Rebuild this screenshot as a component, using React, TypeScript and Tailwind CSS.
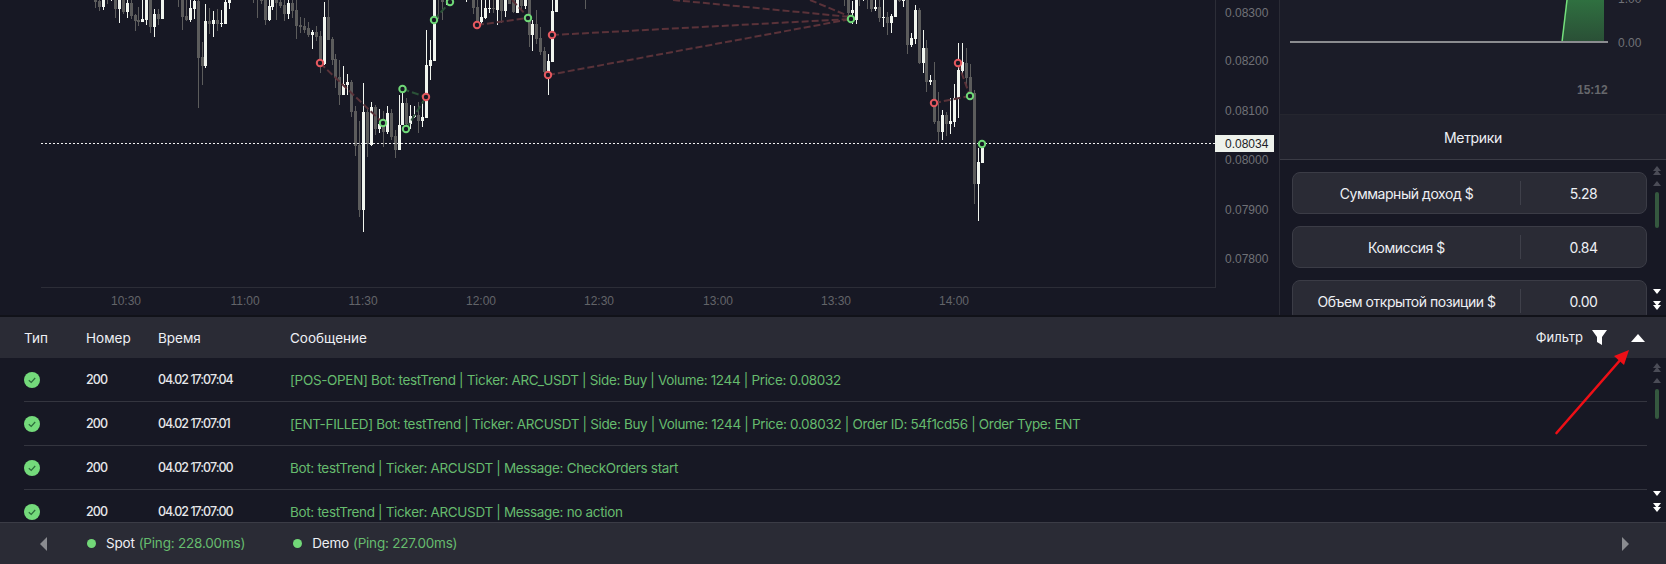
import React from "react";

type C = [number, number, number, number, number, number];
// x, wickTop, wickBottom, bodyTop, bodyBottom, white(1)/gray(0)
const candles: C[] = [
  [95,0,8,-2,2,0],[99,0,11,1,7,0],[103,0,10,0,7,1],[107,0,4,0,0,0],[111,0,1,0,0,1],[115,0,18,0,9,0],[119,0,23,0,9,1],[123,0,14,0,12,0],[127,0,18,3,12,1],[131,0,19,3,16,0],[135,14,31,15,21,0],[138,7,26,20,22,0],[142,0,22,19,22,1],[146,0,25,0,20,1],[150,0,33,0,27,0],[154,9,37,14,27,1],[158,9,25,14,19,0],[162,0,19,0,19,1],[178,0,7,0,0,0],[182,0,30,0,17,0],[186,0,21,16,20,0],[190,0,22,8,20,1],[194,0,19,1,9,1],[198,0,108,1,58,0],[202,42,85,57,66,0],[205,4,68,21,66,1],[209,8,34,21,24,0],[213,11,37,20,24,1],[217,9,31,20,24,0],[221,10,27,23,24,1],[225,0,24,2,24,1],[229,0,9,0,3,1],
  [253,0,3,0,0,0],[257,0,18,0,0,0],[261,0,4,0,1,0],[265,0,25,0,20,0],[269,0,21,6,20,1],[272,0,10,0,7,1],[276,0,20,0,3,0],[280,0,8,2,6,0],[284,0,21,5,14,0],[288,0,19,3,14,1],[292,0,18,3,11,0],[296,0,39,10,26,0],[300,17,33,25,27,0],[304,18,33,26,30,0],[308,22,37,28,35,0],[312,30,49,32,35,1],[316,26,41,32,37,0],[320,31,73,36,63,0],[324,2,65,17,64,1],[328,0,40,17,40,0],[332,37,65,39,60,0],[335,54,88,59,78,0],[339,60,105,77,95,0],[343,66,95,84,95,1],[347,74,95,82,85,1],[351,80,117,82,112,0],[355,106,156,111,146,0],[359,121,217,145,210,0],[363,83,232,112,210,1],[367,108,157,112,144,0],[371,102,146,107,145,1],[375,105,135,107,129,0],[379,109,133,124,129,1],[383,111,147,121,132,0],[387,106,134,113,132,1],[391,109,140,113,137,0],[395,130,158,136,150,0],[399,95,150,125,150,1],[402,88,125,103,125,1],[406,98,127,103,124,0],[410,105,129,116,124,1],[414,106,118,115,117,1],[418,102,133,115,121,0],[422,101,127,117,121,1],[426,30,118,65,118,1],[430,40,80,60,66,1],[434,0,61,0,61,1],[438,0,19,0,0,0],[442,0,20,0,2,0],[446,0,5,0,0,1],
  [466,0,2,0,0,1],[473,0,14,0,8,0],[477,0,27,7,23,0],[481,0,25,17,22,1],[485,0,19,8,18,1],[489,0,13,8,9,1],[493,0,13,8,9,0],[497,0,25,0,10,1],[501,0,23,0,11,0],[505,0,17,0,11,1],[509,0,4,0,4,0],[513,0,13,0,12,0],[517,0,13,0,13,1],[521,0,10,0,6,0],[525,0,9,0,6,1],[529,0,47,0,35,0],[532,20,51,24,35,1],[536,10,44,24,39,0],[540,27,55,38,52,0],[544,47,75,51,72,0],[548,54,95,61,72,1],[552,0,62,11,62,1],[556,0,12,0,12,1],[585,0,9,0,0,0],
  [844,0,6,0,0,0],[848,0,18,0,13,0],[852,1,24,10,13,1],[856,0,24,0,20,1],[859,0,6,0,0,0],[863,0,1,0,0,1],[867,0,9,0,0,0],[871,0,12,0,9,0],[875,0,11,7,9,1],[879,0,22,7,18,0],[883,0,27,17,18,1],[887,12,35,17,23,0],[891,14,33,16,23,1],[895,0,17,0,17,1],[899,0,2,0,1,0],[903,0,7,0,1,1],[907,0,54,0,45,0],[911,33,47,38,45,1],[915,5,44,10,39,1],[919,8,64,10,63,0],[923,30,73,48,63,1],[926,40,92,48,82,0],[930,75,85,80,82,1],[934,62,124,80,122,0],[938,92,143,121,132,0],[942,110,140,115,132,1],[946,112,136,115,124,0],[950,98,134,121,124,1],[954,84,127,98,122,1],[958,43,118,70,98,1],[962,43,75,62,71,1],[966,48,85,63,78,0],[970,64,93,77,92,0],[974,90,204,93,184,0],[978,148,221,162,184,1],[982,143,163,148,163,1],
];

const redLines = [
  [320,63,383,123],[477,25,528,18],[512,0,528,17],[552,35,851,19],[548,75,851,19],[673,0,851,17],[810,0,851,17],[934,103,970,96],[958,63,970,96],
];
const greenLines = [[402.5,89,426,97],[406,129,426,97],[434,20,450,2]];
const redDots = [[320,63],[426,97],[477,25],[552,35],[548,75],[958,63],[934,103]];
const greenDots = [[383,123],[402.5,89],[406,129],[434,20],[450,2],[528,18],[851,19],[970,96],[982,144]];
const times: [string, number][] = [["10:30",126],["11:00",245],["11:30",363],["12:00",481],["12:30",599],["13:00",718],["13:30",836],["14:00",954]];
const prices: [string, number][] = [["0.08300",12],["0.08200",60],["0.08100",110],["0.08000",159],["0.07900",209],["0.07800",258]];

function Chart() {
  return (
    <svg width="1279" height="317" viewBox="0 0 1279 317" className="block shrink-0" fontFamily="'Liberation Sans', sans-serif" fontSize="12">
      <g shapeRendering="crispEdges">
        <line x1="41" y1="287.5" x2="1216" y2="287.5" stroke="#2c2d37" />
        <line x1="1215.5" y1="0" x2="1215.5" y2="288" stroke="#2c2d37" />
        {candles.map(([x, wt, wb, bt, bb, w], i) => (
          <g key={i} fill={w ? "#f1f5ef" : "#5c5c5c"}>
            <rect x={x} y={wt} width="1" height={Math.max(wb - wt, 1)} />
            {bb > 0 && <rect x={x - 1} y={bt} width="3" height={Math.max(bb - bt, 1)} />}
          </g>
        ))}
        <line x1="41" y1="143.5" x2="1216" y2="143.5" stroke="#f2f2f2" strokeDasharray="2 2" />
      </g>
      {redLines.map(([a, b, c, d], i) => (
        <line key={i} x1={a} y1={b} x2={c} y2={d} stroke="#5a3239" strokeWidth="2" strokeDasharray="7 3" />
      ))}
      {greenLines.map(([a, b, c, d], i) => (
        <line key={i} x1={a} y1={b} x2={c} y2={d} stroke="#2b5238" strokeWidth="2" strokeDasharray="7 3" />
      ))}
      {redDots.map(([x, y], i) => (
        <circle key={i} cx={x} cy={y} r="3.2" fill="#171824" stroke="#e4585f" strokeWidth="2" />
      ))}
      {greenDots.map(([x, y], i) => (
        <circle key={i} cx={x} cy={y} r="3.2" fill="#171824" stroke="#6fd877" strokeWidth="2" />
      ))}
      {times.map(([t, x]) => (
        <text key={t} x={x} y="305" textAnchor="middle" fill="#636469">{t}</text>
      ))}
      {prices.map(([t, y]) => (
        <text key={t} x="1225" y={y + 5} fill="#707177">{t}</text>
      ))}
      <rect x="1215" y="135" width="59" height="17" fill="#eef2ec" />
      <text x="1225" y="148" fill="#1c1d26">0.08034</text>
    </svg>
  );
}

function MiniChart() {
  return (
    <svg width="386" height="114" viewBox="0 0 386 114" className="block shrink-0" fontFamily="'Liberation Sans', sans-serif" fontSize="12">
      <defs>
        <linearGradient id="gr" x1="0" y1="0" x2="0" y2="1">
          <stop offset="0" stopColor="#2f7040" />
          <stop offset="1" stopColor="#2a4f36" />
        </linearGradient>
      </defs>
      <polygon points="282,42 287,0 324,0 324,42" fill="url(#gr)" />
      <line x1="282" y1="42" x2="287" y2="0" stroke="#74e07c" strokeWidth="1.5" />
      <line x1="10" y1="42" x2="328" y2="42" stroke="#8b8c90" strokeWidth="2" />
      <text x="338" y="3" fill="#707177">1.00</text>
      <text x="338" y="47" fill="#707177">0.00</text>
      <text x="297" y="94" fill="#66676c" fontWeight="700">15:12</text>
    </svg>
  );
}

function Tri({ up, color }: { up: boolean; color: string }) {
  return (
    <svg width="8" height="5" viewBox="0 0 8 5" className="block">
      <polygon points={up ? "4,0 8,5 0,5" : "0,0 8,0 4,5"} fill={color} />
    </svg>
  );
}

function Scroller({ thumbH, top, bottom }: { thumbH: string; top: string; bottom: string }) {
  return (
    <div className={`w-[19px] shrink-0 flex flex-col items-center ${top} ${bottom}`}>
      <Tri up color="#4b4c57" />
      <div className="-mt-[1px]"><Tri up color="#4b4c57" /></div>
      <div className="mt-[6px]"><Tri up color="#4b4c57" /></div>
      <div className={`mt-[6px] w-[4px] rounded-full bg-[#35583f] ${thumbH}`} />
      <div className="flex-1" />
      <Tri up={false} color="#ffffff" />
      <div className="mt-[7px]"><Tri up={false} color="#ffffff" /></div>
      <div className="-mt-[1px]"><Tri up={false} color="#ffffff" /></div>
    </div>
  );
}

function Metric({ label, value }: { label: string; value: string }) {
  return (
    <div className="h-[42px] shrink-0 flex items-center rounded-[8px] border border-[#3b3c46] bg-[#2a2b35] text-[14px] tracking-[-0.45px] text-[#eef0f4]">
      <div className="w-[227px] text-center">{label}</div>
      <div className="h-[24px] w-px bg-[#3f404a]" />
      <div className="flex-1 text-center">{value}</div>
    </div>
  );
}

function Check() {
  return (
    <svg width="16" height="16" viewBox="0 0 16 16" className="block">
      <circle cx="8" cy="8" r="8" fill="#74da7b" />
      <path d="M4.8 8.2 7.2 10.4 11.2 6" fill="none" stroke="#2b6a3a" strokeWidth="1.2" />
    </svg>
  );
}

const rows = [
  ["04.02 17:07:04", "[POS-OPEN] Bot: testTrend | Ticker: ARC_USDT | Side: Buy | Volume: 1244 | Price: 0.08032"],
  ["04.02 17:07:01", "[ENT-FILLED] Bot: testTrend | Ticker: ARCUSDT | Side: Buy | Volume: 1244 | Price: 0.08032 | Order ID: 54f1cd56 | Order Type: ENT"],
  ["04.02 17:07:00", "Bot: testTrend | Ticker: ARCUSDT | Message: CheckOrders start"],
  ["04.02 17:07:00", "Bot: testTrend | Ticker: ARCUSDT | Message: no action"],
];

export default function App() {
  return (
    <div className="relative w-[1666px] h-[564px] overflow-hidden flex flex-col bg-[#171824] font-['Inter',sans-serif] text-[13.5px]">
      <div className="h-[315px] flex overflow-hidden shrink-0">
        <div className="w-[1279px] shrink-0 overflow-hidden"><Chart /></div>
        <div className="flex-1 flex flex-col border-l border-[#2a2b35] bg-[#1b1c28] overflow-hidden">
          <MiniChart />
          <div className="h-[46px] shrink-0 flex items-center justify-center bg-[#20212c] border-t border-b border-t-[#25262f] border-b-[#3a3b45] text-[14px] tracking-[-0.35px] text-[#eef0f4]">
            Метрики
          </div>
          <div className="flex-1 flex overflow-hidden bg-[#171824]">
            <div className="flex-1 flex flex-col gap-[12px] pt-[12px] pl-[12px] overflow-hidden">
              <Metric label="Суммарный доход $" value="5.28" />
              <Metric label="Комиссия $" value="0.84" />
              <Metric label="Объем открытой позиции $" value="0.00" />
            </div>
            <Scroller thumbH="h-[36px]" top="pt-[6px]" bottom="pb-[5px]" />
          </div>
        </div>
      </div>
      <div className="h-[2px] shrink-0 bg-[#111219]" />
      <div className="h-[41px] shrink-0 flex items-center bg-[#2a2b35] pl-[24px] pr-[21px] text-[#eef0f4]">
        <div className="w-[62px] pt-[1px]">Тип</div>
        <div className="w-[72px] pt-[1px]">Номер</div>
        <div className="w-[132px] pt-[1px]">Время</div>
        <div className="flex-1 pt-[1px]">Сообщение</div>
        <div className="pt-[1px] text-[13px]">Фильтр</div>
        <svg width="15" height="15" viewBox="0 0 15 15" className="ml-[9px] block">
          <path d="M0 0H15L10 7V15L5 12V7Z" fill="#ffffff" />
        </svg>
        <svg width="14" height="8" viewBox="0 0 14 8" className="ml-[24px] block">
          <polygon points="7,0 14,8 0,8" fill="#ffffff" />
        </svg>
      </div>
      <div className="flex-1 flex overflow-hidden bg-[#171824]">
        <div className="flex-1 pl-[24px] overflow-hidden">
          {rows.map(([time, msg], i) => (
            <div key={i} className="h-[44px] shrink-0 flex items-center border-b border-[#34353f] pt-[1px]">
              <div className="w-[62px]"><Check /></div>
              <div className="w-[72px] text-[#e6e7ea] text-[12.5px] font-medium tracking-[-0.9px]">200</div>
              <div className="w-[132px] text-[#e6e7ea] text-[12.5px] font-medium tracking-[-1px]">{time}</div>
              <div className="flex-1 pt-[1px] text-[#66bb6e] tracking-[-0.33px]">{msg}</div>
            </div>
          ))}
        </div>
        <Scroller thumbH="h-[30px]" top="pt-[5px]" bottom="pb-[10px]" />
      </div>
      <div className="h-[42px] shrink-0 flex items-center border-t border-[#3b3c46] bg-[#2a2b35] pl-[40px] pr-[37px] tracking-[-0.2px]">
        <svg width="7" height="14" viewBox="0 0 7 14" className="block">
          <polygon points="7,0 7,14 0,7" fill="#8a8b90" />
        </svg>
        <span className="ml-[40px] h-[9px] w-[9px] rounded-full bg-[#72d878]" />
        <span className="ml-[10px] text-[#eef0f4]">Spot</span>
        <span className="ml-[4px] text-[#66bb6e]">(Ping: 228.00ms)</span>
        <span className="ml-[48px] h-[9px] w-[9px] rounded-full bg-[#72d878]" />
        <span className="ml-[10px] text-[#eef0f4]">Demo</span>
        <span className="ml-[4px] text-[#66bb6e]">(Ping: 227.00ms)</span>
        <div className="flex-1" />
        <svg width="7" height="14" viewBox="0 0 7 14" className="block">
          <polygon points="0,0 0,14 7,7" fill="#8a8b90" />
        </svg>
      </div>
      <svg width="90" height="100" viewBox="0 0 90 100" className="absolute left-[1550px] top-[345px] block">
        <line x1="6.5" y1="88" x2="72" y2="13" stroke="#ee0f16" strokeWidth="2.6" strokeLinecap="round" />
        <polygon points="79,5 74,20 64,11" fill="#ee0f16" />
      </svg>
    </div>
  );
}
